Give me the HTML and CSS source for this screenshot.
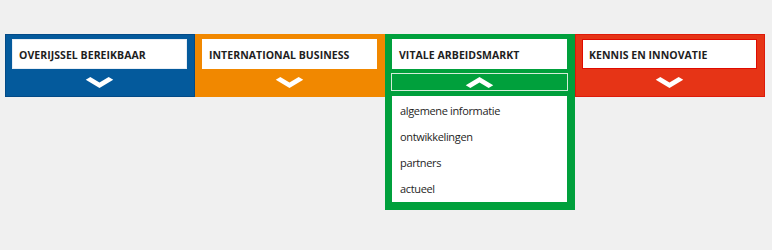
FILE: index.html
```html
<!DOCTYPE html>
<html lang="nl">
<head>
    <meta charset="UTF-8">
    <title>Thema's</title>
    <link rel="stylesheet" href="styles.css">
</head>
<body>
    <div class="themes">
        <div class="theme theme-blue">
            <div class="theme-title">Overijssel bereikbaar</div>
            <div class="theme-toggle">
                <svg class="chevron" viewBox="0 0 30 12"><polygon points="0,3 5,0 15,6 25,0 30,3 15,12"/></svg>
            </div>
        </div>
        <div class="theme theme-orange">
            <div class="theme-title">International business</div>
            <div class="theme-toggle">
                <svg class="chevron" viewBox="0 0 30 12"><polygon points="0,3 5,0 15,6 25,0 30,3 15,12"/></svg>
            </div>
        </div>
        <div class="theme theme-green open">
            <div class="theme-title">Vitale arbeidsmarkt</div>
            <div class="theme-toggle">
                <svg class="chevron" viewBox="0 0 30 12"><polygon points="0,9 5,12 15,6 25,12 30,9 15,0"/></svg>
            </div>
            <ul class="theme-menu">
                <li>algemene informatie</li>
                <li>ontwikkelingen</li>
                <li>partners</li>
                <li>actueel</li>
            </ul>
        </div>
        <div class="theme theme-red">
            <div class="theme-title">Kennis en innovatie</div>
            <div class="theme-toggle">
                <svg class="chevron" viewBox="0 0 30 12"><polygon points="0,3 5,0 15,6 25,0 30,3 15,12"/></svg>
            </div>
        </div>
    </div>
</body>
</html>
```

FILE: styles.css
```css
* {
    box-sizing: border-box;
}
body {
    margin: 0;
    padding: 34px 5px;
    background: #f0f0f0;
    font-family: 'Open Sans', 'Liberation Sans', sans-serif;
    color: #1e1e1e;
}

.themes {
    display: grid; grid-template-columns: repeat(4, 190px); align-items: start;
}

.theme { border: 1px solid; padding: 4px 7px 0 6px; }
.theme.open { padding-bottom: 7px; }

.theme-blue { background: #045a9c; border-color: #034a86; }
.theme-orange { background: #f18800; border-color: #f18800; }
.theme-green { background: #00a03c; border-color: #00a03c; }
.theme-red { background: #e63416; border-color: #dd1a0a; }

.theme-title {
    height: 30px; background: #fff; border: 1px solid #fff;
    padding: 2px 6px 0; display: flex; align-items: center;
    font-size: 10.5px; font-weight: 700; text-transform: uppercase; letter-spacing: 0.05px;
}
.theme-blue .theme-title { border-color: #e8eef5; }
.theme-red .theme-title { border-color: #e00a00; }

.theme-toggle {
    height: 18px; margin: 4px 0 5px; display: flex; align-items: center; justify-content: center;
}
.open .theme-toggle { border: 1px solid #d4ecd9; margin-left: -1px; margin-right: -1px; }

.chevron { width: 29px; height: 11px; fill: #fff; display: block; }

.theme-menu {
    list-style: none; margin: 0; padding: 2px 0 0; background: #fff;
}
.theme-menu li {
    height: 26px; line-height: 26px; padding-left: 8px;
    font-size: 11px; letter-spacing: -0.35px;
}
```
